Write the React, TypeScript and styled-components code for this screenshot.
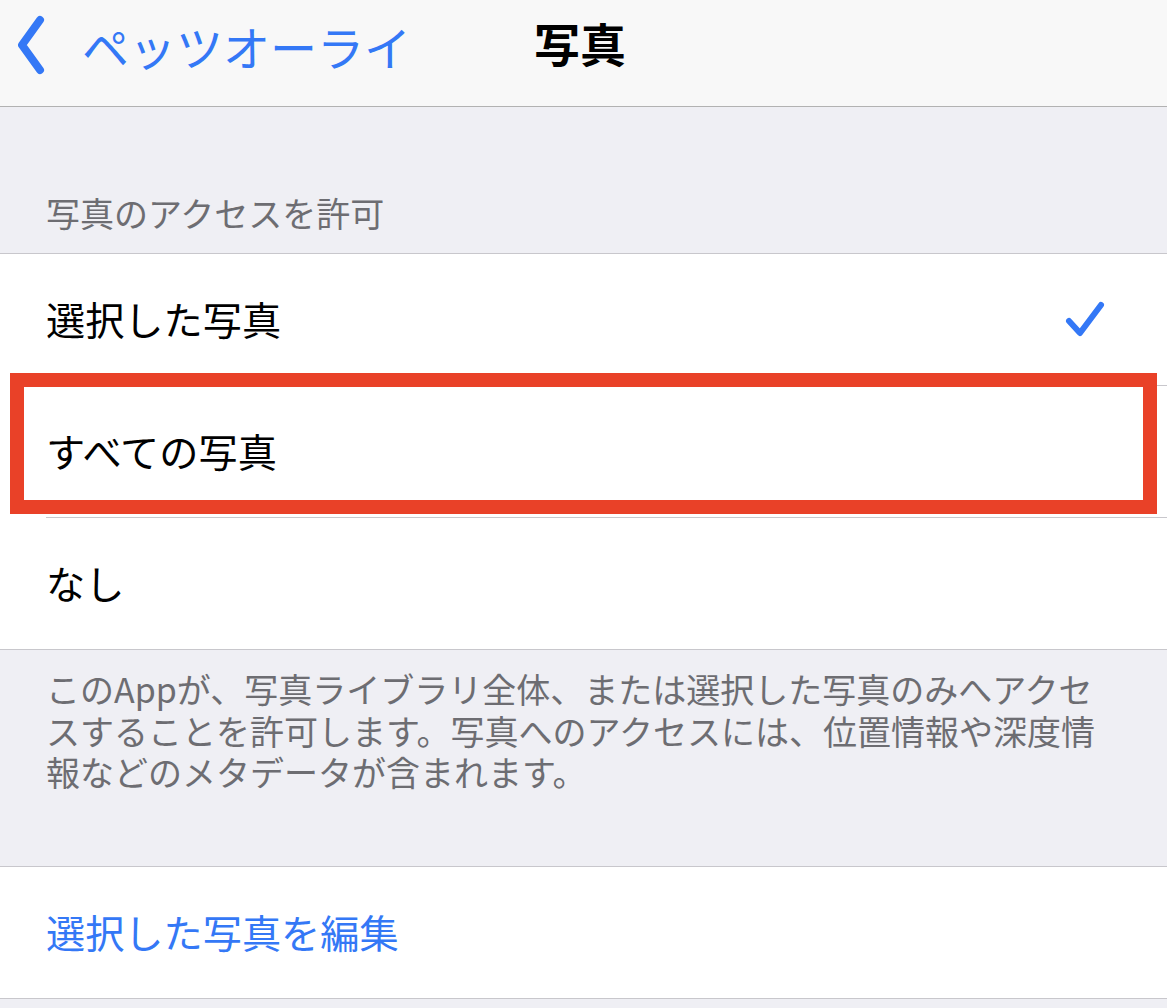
import React from "react"
import styled, { createGlobalStyle } from "styled-components"

const GlobalStyle = createGlobalStyle`
  html, body {
    margin: 0;
    padding: 0;
    background: #efeff4;
    font-family: "Noto Sans CJK JP", "Noto Sans", sans-serif;
  }
`

const Page = styled.div`
  width: 1167px;
  min-height: 1008px;
  background: #efeff4;
`

// top navigation bar
const NavBar = styled.header`
  height: 106px;
  background: #f8f8f8;
  border-bottom: 1px solid #b2b2b2;
  display: flex;
  align-items: center;
  position: relative;
`

const BackButton = styled.a`
  display: flex;
  align-items: center;
  gap: 36px;
  padding-left: 16px;
  padding-bottom: 16px;
  color: #3478f6;
  font-size: 47px;
  text-decoration: none;
`

const NavTitle = styled.div`
  position: absolute;
  left: 534px;
  top: 9px;
  font-size: 46px;
  font-weight: 700;
  color: #000;
`

const SectionHeader = styled.div`
  height: 146px;
  display: flex;
  align-items: flex-end;
  padding-left: 46px;
  padding-bottom: 16px;
  box-sizing: border-box;
  font-size: 34px;
  color: #6d6d72;
`

const Group = styled.div`
  background: #fff;
  border-top: 1px solid #c8c7cc;
  border-bottom: 1px solid #c8c7cc;
`

const Row = styled.div<{ $last?: boolean }>`
  position: relative;
  height: 131px;
  display: flex;
  align-items: center;
  justify-content: space-between;
  margin-left: 46px;
  padding-right: 60px;
  border-bottom: ${p => (p.$last ? "none" : "1px solid #c8c7cc")};
`

const RowLabel = styled.span<{ $link?: boolean }>`
  font-size: 39.2px;
  color: ${p => (p.$link ? "#3478f6" : "#000")};
  padding-bottom: 4px;
`

// red frame drawn over the "all photos" row
const Highlight = styled.div`
  position: absolute;
  left: -36px;
  right: 10px;
  top: -13px;
  height: 141px;
  border: 14px solid #e94128;
  box-sizing: border-box;
  pointer-events: none;
`

const Footer = styled.div`
  height: 216px;
  padding: 18px 60px 0 46px;
  box-sizing: border-box;
  font-size: 34px;
  line-height: 41.5px;
  color: #6d6d72;
`

const Chevron = () => (
  <svg width="30" height="60" viewBox="0 0 30 60">
    <path
      d="M24 5 L6 30 L24 55"
      fill="none"
      stroke="#3478f6"
      strokeWidth="8"
      strokeLinecap="round"
      strokeLinejoin="round"
    />
  </svg>
)

const Check = () => (
  <svg width="42" height="40" viewBox="0 0 42 40">
    <path
      d="M4 21 L15 33 L36 5"
      fill="none"
      stroke="#3478f6"
      strokeWidth="6"
      strokeLinecap="round"
      strokeLinejoin="round"
    />
  </svg>
)

export default function App() {
  return (
    <Page>
      <GlobalStyle />
      <NavBar>
        <BackButton href="#">
          <Chevron />
          ペッツオーライ
        </BackButton>
        <NavTitle>写真</NavTitle>
      </NavBar>

      <SectionHeader>写真のアクセスを許可</SectionHeader>

      <Group>
        <Row>
          <RowLabel>選択した写真</RowLabel>
          <Check />
        </Row>
        <Row>
          <RowLabel>すべての写真</RowLabel>
          <Highlight />
        </Row>
        <Row $last>
          <RowLabel>なし</RowLabel>
        </Row>
      </Group>

      <Footer>
        このAppが、写真ライブラリ全体、または選択した写真のみへアクセスすることを許可します。写真へのアクセスには、位置情報や深度情報などのメタデータが含まれます。
      </Footer>

      <Group>
        <Row $last>
          <RowLabel $link>選択した写真を編集</RowLabel>
        </Row>
      </Group>
    </Page>
  )
}
